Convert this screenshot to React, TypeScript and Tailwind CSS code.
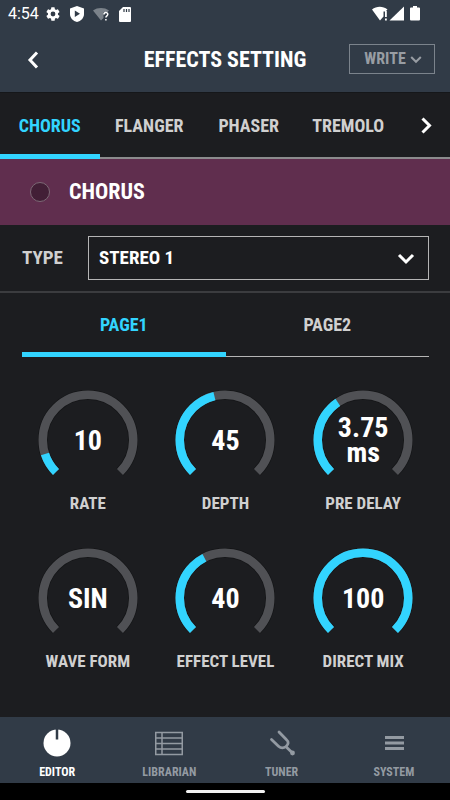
import { useState } from "react";
import type { ReactNode } from "react";

type Knob = { label: string; value: string; level: number };

const knobs: Knob[] = [
  { label: "RATE", value: "10", level: 10 },
  { label: "DEPTH", value: "45", level: 45 },
  { label: "PRE DELAY", value: "3.75 ms", level: 37.5 },
  { label: "WAVE FORM", value: "SIN", level: 0 },
  { label: "EFFECT LEVEL", value: "40", level: 40 },
  { label: "DIRECT MIX", value: "100", level: 100 },
];

const effects = ["CHORUS", "FLANGER", "PHASER", "TREMOLO"];
const pages = ["PAGE1", "PAGE2"];

function Chevron({ d, className }: { d: string; className: string }) {
  return (
    <svg viewBox="0 0 20 20" className={className} fill="none" stroke="currentColor" aria-hidden="true">
      <path d={d} />
    </svg>
  );
}

function StatusBar() {
  return (
    <div className="flex h-7 items-center justify-between pl-2 pr-[30px] text-white">
      <div className="flex items-center">
        <span className="w-[37px] font-['Roboto',sans-serif] text-[16px] font-normal leading-7">4:54</span>
        <svg viewBox="0 0 24 24" className="h-4 w-4" fill="currentColor" aria-hidden="true">
          <path d="M19.4 13a7.500 7.500 0 0 0 0-2l2.100-1.700a.5.5 0 0 0 .1-.6l-2-3.500a.5.500 0 0 0-.6-.2l-2.500 1a7.300 7.300 0 0 0-1.700-1L14.400 2.400a.5.5 0 0 0-.5-.4h-4a.5.5 0 0 0-.5.400L9 5a7.700 7.700 0 0 0-1.700 1L4.900 5a.5.5 0 0 0-.6.200l-2 3.500a.5.5 0 0 0 .1.600L4.500 11a7.900 7.900 0 0 0 0 2l-2.100 1.700a.5.5 0 0 0-.1.600l2 3.500a.5.5 0 0 0 .6.200l2.500-1a7.300 7.300 0 0 0 1.700 1l.4 2.600a.5.5 0 0 0 .5.400h4a.5.5 0 0 0 .5-.4l.4-2.600a7.700 7.700 0 0 0 1.700-1l2.500 1a.5.5 0 0 0 .6-.2l2-3.500a.5.5 0 0 0-.1-.6zM12 15.600a3.600 3.600 0 1 1 0-7.200 3.600 3.600 0 0 1 0 7.200z" />
        </svg>
        <svg viewBox="0 0 14 16" className="ml-[9px] h-4 w-3.5" aria-hidden="true">
          <path d="M7 0 14 2.500V8c0 4-3 7-7 8-4-1-7-4-7-8V2.500z" fill="#fff" />
          <path d="M4.800 4.500v6.400L10 7.700z" fill="#313b47" />
        </svg>
        <svg viewBox="0 0 17 14" className="ml-[9px] h-3.5 w-[17px]" aria-hidden="true">
          <path d="M0 3.500C4.500.2 11.500.2 16 3.500L14.500 5h-4v6L8 13.500z" fill="#7b828a" />
          <path d="M11 7.500c0-2.600 3.800-2.500 3.800-.2 0 1.600-1.900 1.500-1.900 3.200M12.900 11.900v1.600" fill="none" stroke="#fff" strokeWidth="1.500" />
        </svg>
        <svg viewBox="0 0 12 15" className="ml-[9px] h-[15px] w-3" aria-hidden="true">
          <path d="M4 0h7a1 1 0 0 1 1 1v13a1 1 0 0 1-1 1H1a1 1 0 0 1-1-1V4z" fill="#fff" />
          <path d="M5 2v3M7.500 2v3M10 2v3" stroke="#313b47" strokeWidth="1.200" />
        </svg>
      </div>
      <svg viewBox="0 0 48 16" className="h-4 w-12" fill="#fff" aria-hidden="true">
        <path d="M0 3.500C4.500-.3 11-.3 15.500 3.500L13.500 5.500h-2V10.500L8 14.500z" />
        <path d="M13 5h1.800v6H13zM13 12.500h1.800v2H13z" />
        <path d="M32 .5v14H17.500z" />
        <path d="M41 0h4v1.500h2a1 1 0 0 1 1 1v11a1 1 0 0 1-1 1h-8a1 1 0 0 1-1-1v-11a1 1 0 0 1 1-1h2z" />
      </svg>
    </div>
  );
}

function Dial({ label, value, level }: Knob) {
  const arc = "M55.500 472A45.250 45.250 0 1 1 119.500 472";
  return (
    <figure className="flex flex-col items-center">
      <div className="grid h-[100px] w-[100px] place-items-center">
        <svg viewBox="37.500 390 100 100" className="col-start-1 row-start-1 h-full w-full" fill="none" aria-hidden="true">
          <path d={arc} stroke="#141517" strokeWidth="10" />
          <path d={arc} stroke="#505155" strokeWidth="8.500" />
          {level > 0 && (
            <path d={arc} stroke="#32d4ff" strokeWidth="8.500" pathLength={100} strokeDasharray={`${level} 200`} />
          )}
        </svg>
        <div className="col-start-1 row-start-1 w-16 text-center text-[28px] leading-[25px] text-white">{value}</div>
      </div>
      <figcaption className="mt-[3px] text-[17px] leading-5 text-[#d0d0d0]">{label}</figcaption>
    </figure>
  );
}

function NavItem({ label, active, children }: { label: string; active?: boolean; children: ReactNode }) {
  return (
    <button type="button" className={`flex flex-col items-center pt-3 ${active ? "text-white" : "text-[#939aa2]"}`}>
      <svg viewBox="0 0 28 28" className="h-7 w-7" fill="none" stroke="currentColor" aria-hidden="true">
        {children}
      </svg>
      <span className="mt-[7px] text-[12px] leading-4">{label}</span>
    </button>
  );
}

export default function App() {
  const [effect, setEffect] = useState("CHORUS");
  const [page, setPage] = useState("PAGE1");

  return (
    <div className="flex min-h-screen flex-col bg-[#1c1d20] font-['Roboto_Condensed','Liberation_Sans_Narrow',Roboto,sans-serif] font-bold">
      <header className="bg-[#313b47]">
        <StatusBar />
        <div className="grid h-16 grid-cols-[1fr_auto_1fr] items-center pb-0.5">
          <button type="button" aria-label="Back" className="ml-[22px] w-5 text-white">
            <Chevron d="M15 3.500 8 11l7 7.500" className="h-5 w-5 stroke-[3]" />
          </button>
          <h1 className="pt-0.5 text-[22px] leading-7 text-white">EFFECTS SETTING</h1>
          <button
            type="button"
            className="mr-[15px] flex h-[30px] w-[86px] items-center justify-center justify-self-end border border-[#7b838c] pl-1 text-[16px] text-[#989da3]"
          >
            WRITE
            <Chevron d="M4 7.500l6 6 6-6" className="ml-0.5 h-4 w-4 stroke-[2.500]" />
          </button>
        </div>
      </header>

      <nav className="flex h-[67px] border-t border-[#15171a]">
        {effects.map((name) => (
          <button
            key={name}
            type="button"
            onClick={() => setEffect(name)}
            className={`flex-1 text-[18px] ${
              effect === name
                ? "border-b-[5px] border-[#32d4ff] pt-1 text-[#32d4ff]"
                : "border-b-2 border-[#8b8b8d] pt-px text-[#d0d0d0]"
            }`}
          >
            {name}
          </button>
        ))}
        <button
          type="button"
          aria-label="More effects"
          className="flex w-[52px] items-center justify-center border-b-2 border-[#8b8b8d] text-white"
        >
          <Chevron d="M8.500 3.500l7 7-7 7" className="h-5 w-5 stroke-[3]" />
        </button>
      </nav>

      <section className="flex h-[66px] items-center bg-[#602e4e] pl-[30px]">
        <button
          type="button"
          aria-label="Chorus on"
          className="h-5 w-5 rounded-full border border-[#7c6975] bg-[#421f36]"
        />
        <h2 className="ml-[19px] text-[22px] leading-7 text-white">CHORUS</h2>
      </section>

      <div className="flex h-[68px] items-center border-b-2 border-[#3b3c3f] pl-[22px] pr-[21px]">
        <label htmlFor="type" className="w-[66px] text-[19px] text-[#d0d0d0]">
          TYPE
        </label>
        <div className="grid flex-1 items-center">
          <select
            id="type"
            className="col-start-1 row-start-1 h-11 w-full appearance-none border border-[#b5b5b5] bg-[#1c1d20] pl-[10px] text-[19px] text-white"
          >
            <option>STEREO 1</option>
          </select>
          <Chevron
            d="M3 7l7 7 7-7"
            className="pointer-events-none col-start-1 row-start-1 mr-[13px] h-5 w-5 justify-self-end stroke-[3] text-white"
          />
        </div>
      </div>

      <div className="ml-[22px] mr-[21px] flex h-16">
        {pages.map((name) => (
          <button
            key={name}
            type="button"
            onClick={() => setPage(name)}
            className={`flex-1 text-[18px] ${
              page === name
                ? "border-b-[5px] border-[#32d4ff] pt-[3px] text-[#32d4ff]"
                : "border-b border-[#b5b5b5] text-[#d0d0d0]"
            }`}
          >
            {name}
          </button>
        ))}
      </div>

      <main className="grid flex-1 grid-cols-3 content-start gap-y-[35px] pl-[19px] pr-[18px] pt-[33px]">
        {knobs.map((knob) => (
          <Dial key={knob.label} {...knob} />
        ))}
      </main>

      <nav className="grid h-[66px] grid-cols-4 items-start bg-[#313b47] pl-px">
        <NavItem label="EDITOR" active>
          <circle cx="14" cy="14" r="13.500" fill="currentColor" stroke="none" />
          <path d="M14 0v10.500" stroke="#313b47" strokeWidth="2.500" />
        </NavItem>
        <NavItem label="LIBRARIAN">
          <path d="M.75 3.500h26.500v22H.75zM7 3.500v22M.75 9h26.500M.75 14.500h26.500M.75 20h26.500" strokeWidth="1.500" />
        </NavItem>
        <NavItem label="TUNER">
          <path d="M3.500 10.500l7 6.700c2.500 2.300 5.500 1.800 7.500.3 2.500-2.500 3-4.500.5-6.700L11 3M18 17.700l6.500 6.300" strokeWidth="2.800" strokeLinecap="round" />
          <circle cx="24.500" cy="24" r="2.400" fill="currentColor" stroke="none" />
        </NavItem>
        <NavItem label="SYSTEM">
          <path d="M5 8.500h19M5 14h19M5 19.500h19" strokeWidth="2.800" />
        </NavItem>
      </nav>
      <div className="flex h-[17px] items-center justify-center bg-black">
        <div className="h-[3px] w-[79px] rounded-full bg-[#f2f2f2]" />
      </div>
    </div>
  );
}
